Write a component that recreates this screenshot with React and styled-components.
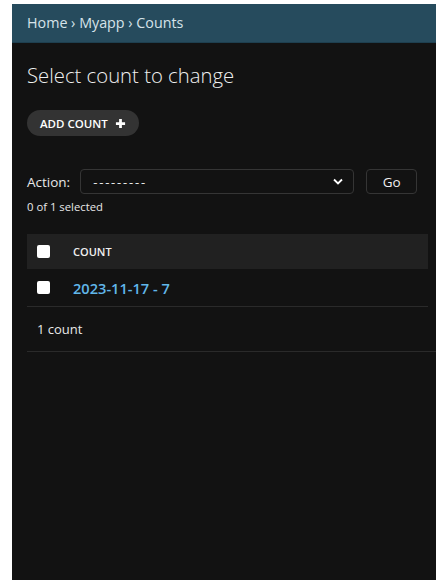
import styled, { createGlobalStyle } from "styled-components";

const GlobalStyle = createGlobalStyle`
  html, body {
    margin: 0;
    padding: 0;
    background: #ffffff;
  }
  body {
    font-family: "Open Sans", "Noto Sans", sans-serif;
  }
`;

export default function App() {
  return (
    <>
      <GlobalStyle />
      <Styled.Page>
        <Styled.Breadcrumbs>
          <a>Home</a> › <a>Myapp</a> › Counts
        </Styled.Breadcrumbs>

        <Styled.Content>
          <Styled.Title>Select count to change</Styled.Title>

          <Styled.AddButton>
            ADD COUNT
            <svg width="11" height="11" viewBox="0 0 12 12">
              <path d="M6 1v10M1 6h10" stroke="#fff" strokeWidth="3" />
            </svg>
          </Styled.AddButton>

          {/* actions bar */}
          <Styled.Actions>
            <Styled.Label>Action:</Styled.Label>
            <Styled.Select>
              <span>---------</span>
              <svg width="10" height="7" viewBox="0 0 10 7">
                <path d="M1 1.5l4 4 4-4" fill="none" stroke="#fff" strokeWidth="1.8" />
              </svg>
            </Styled.Select>
            <Styled.GoButton>Go</Styled.GoButton>
          </Styled.Actions>
          <Styled.Counter>0 of 1 selected</Styled.Counter>

          <Styled.Table>
            <Styled.HeadRow>
              <Styled.Check />
              <Styled.HeadCell>COUNT</Styled.HeadCell>
            </Styled.HeadRow>
            <Styled.Row>
              <Styled.Check />
              <Styled.Link>2023-11-17 - 7</Styled.Link>
            </Styled.Row>
          </Styled.Table>
        </Styled.Content>

        <Styled.Paginator>1 count</Styled.Paginator>
      </Styled.Page>
    </>
  );
}

const Styled = {
  Page: styled.div`
    margin: 4px 0 0 12px;
    min-height: 576px;
    background: #121212;
    color: #f5f5f5;
  `,

  Breadcrumbs: styled.div`
    height: 38px;
    line-height: 38px;
    padding: 0 15px;
    background: #264b5d;
    border-bottom: 1px solid #1e3f4f;
    color: #d6e3ea;
    font-size: 14.3px;

    a {
      color: #d6e3ea;
    }
  `,

  Content: styled.div`
    padding: 19px 15px 0;
  `,

  Title: styled.h1`
    margin: 0 0 22px;
    font-size: 20.3px;
    font-weight: 300;
    line-height: 26px;
    color: #f0f0f0;
  `,

  AddButton: styled.button`
    display: inline-flex;
    align-items: center;
    gap: 7px;
    height: 26px;
    padding: 0 13px;
    border: none;
    border-radius: 13px;
    background: #333333;
    color: #ffffff;
    font-family: inherit;
    font-size: 11.5px;
    font-weight: 600;
  `,

  Actions: styled.div`
    display: flex;
    align-items: center;
    margin-top: 33px;
  `,

  Label: styled.span`
    font-size: 13.5px;
    color: #e8e8e8;
    margin-right: 10px;
  `,

  Select: styled.div`
    display: flex;
    align-items: center;
    justify-content: space-between;
    box-sizing: border-box;
    width: 274px;
    height: 25px;
    padding: 0 10px 0 12px;
    border: 1px solid #353535;
    border-radius: 4px;
    font-size: 13px;
    letter-spacing: 1.8px;
    color: #e8e8e8;
  `,

  GoButton: styled.button`
    box-sizing: border-box;
    width: 51px;
    height: 25px;
    margin-left: 12px;
    border: 1px solid #353535;
    border-radius: 4px;
    background: #121212;
    color: #f0f0f0;
    font-family: inherit;
    font-size: 13.5px;
  `,

  Counter: styled.div`
    margin-top: 5px;
    font-size: 11.3px;
    color: #e8e8e8;
  `,

  Table: styled.div`
    width: 401px;
    margin-top: 20px;
  `,

  HeadRow: styled.div`
    display: flex;
    align-items: center;
    height: 35px;
    background: #212121;
  `,

  Row: styled.div`
    display: flex;
    align-items: center;
    height: 37px;
    border-bottom: 1px solid #2a2a2a;
  `,

  Check: styled.span`
    width: 13px;
    height: 13px;
    margin: 0 23px 0 10px;
    background: #ffffff;
    border-radius: 2px;
  `,

  HeadCell: styled.span`
    font-size: 11px;
    font-weight: 600;
    color: #f0f0f0;
  `,

  Link: styled.a`
    font-size: 14.6px;
    font-weight: 600;
    color: #61b7ea;
  `,

  Paginator: styled.div`
    margin-left: 15px;
    height: 44px;
    line-height: 44px;
    padding-left: 10px;
    border-bottom: 1px solid #2a2a2a;
    font-size: 13px;
    color: #e8e8e8;
  `,
};
